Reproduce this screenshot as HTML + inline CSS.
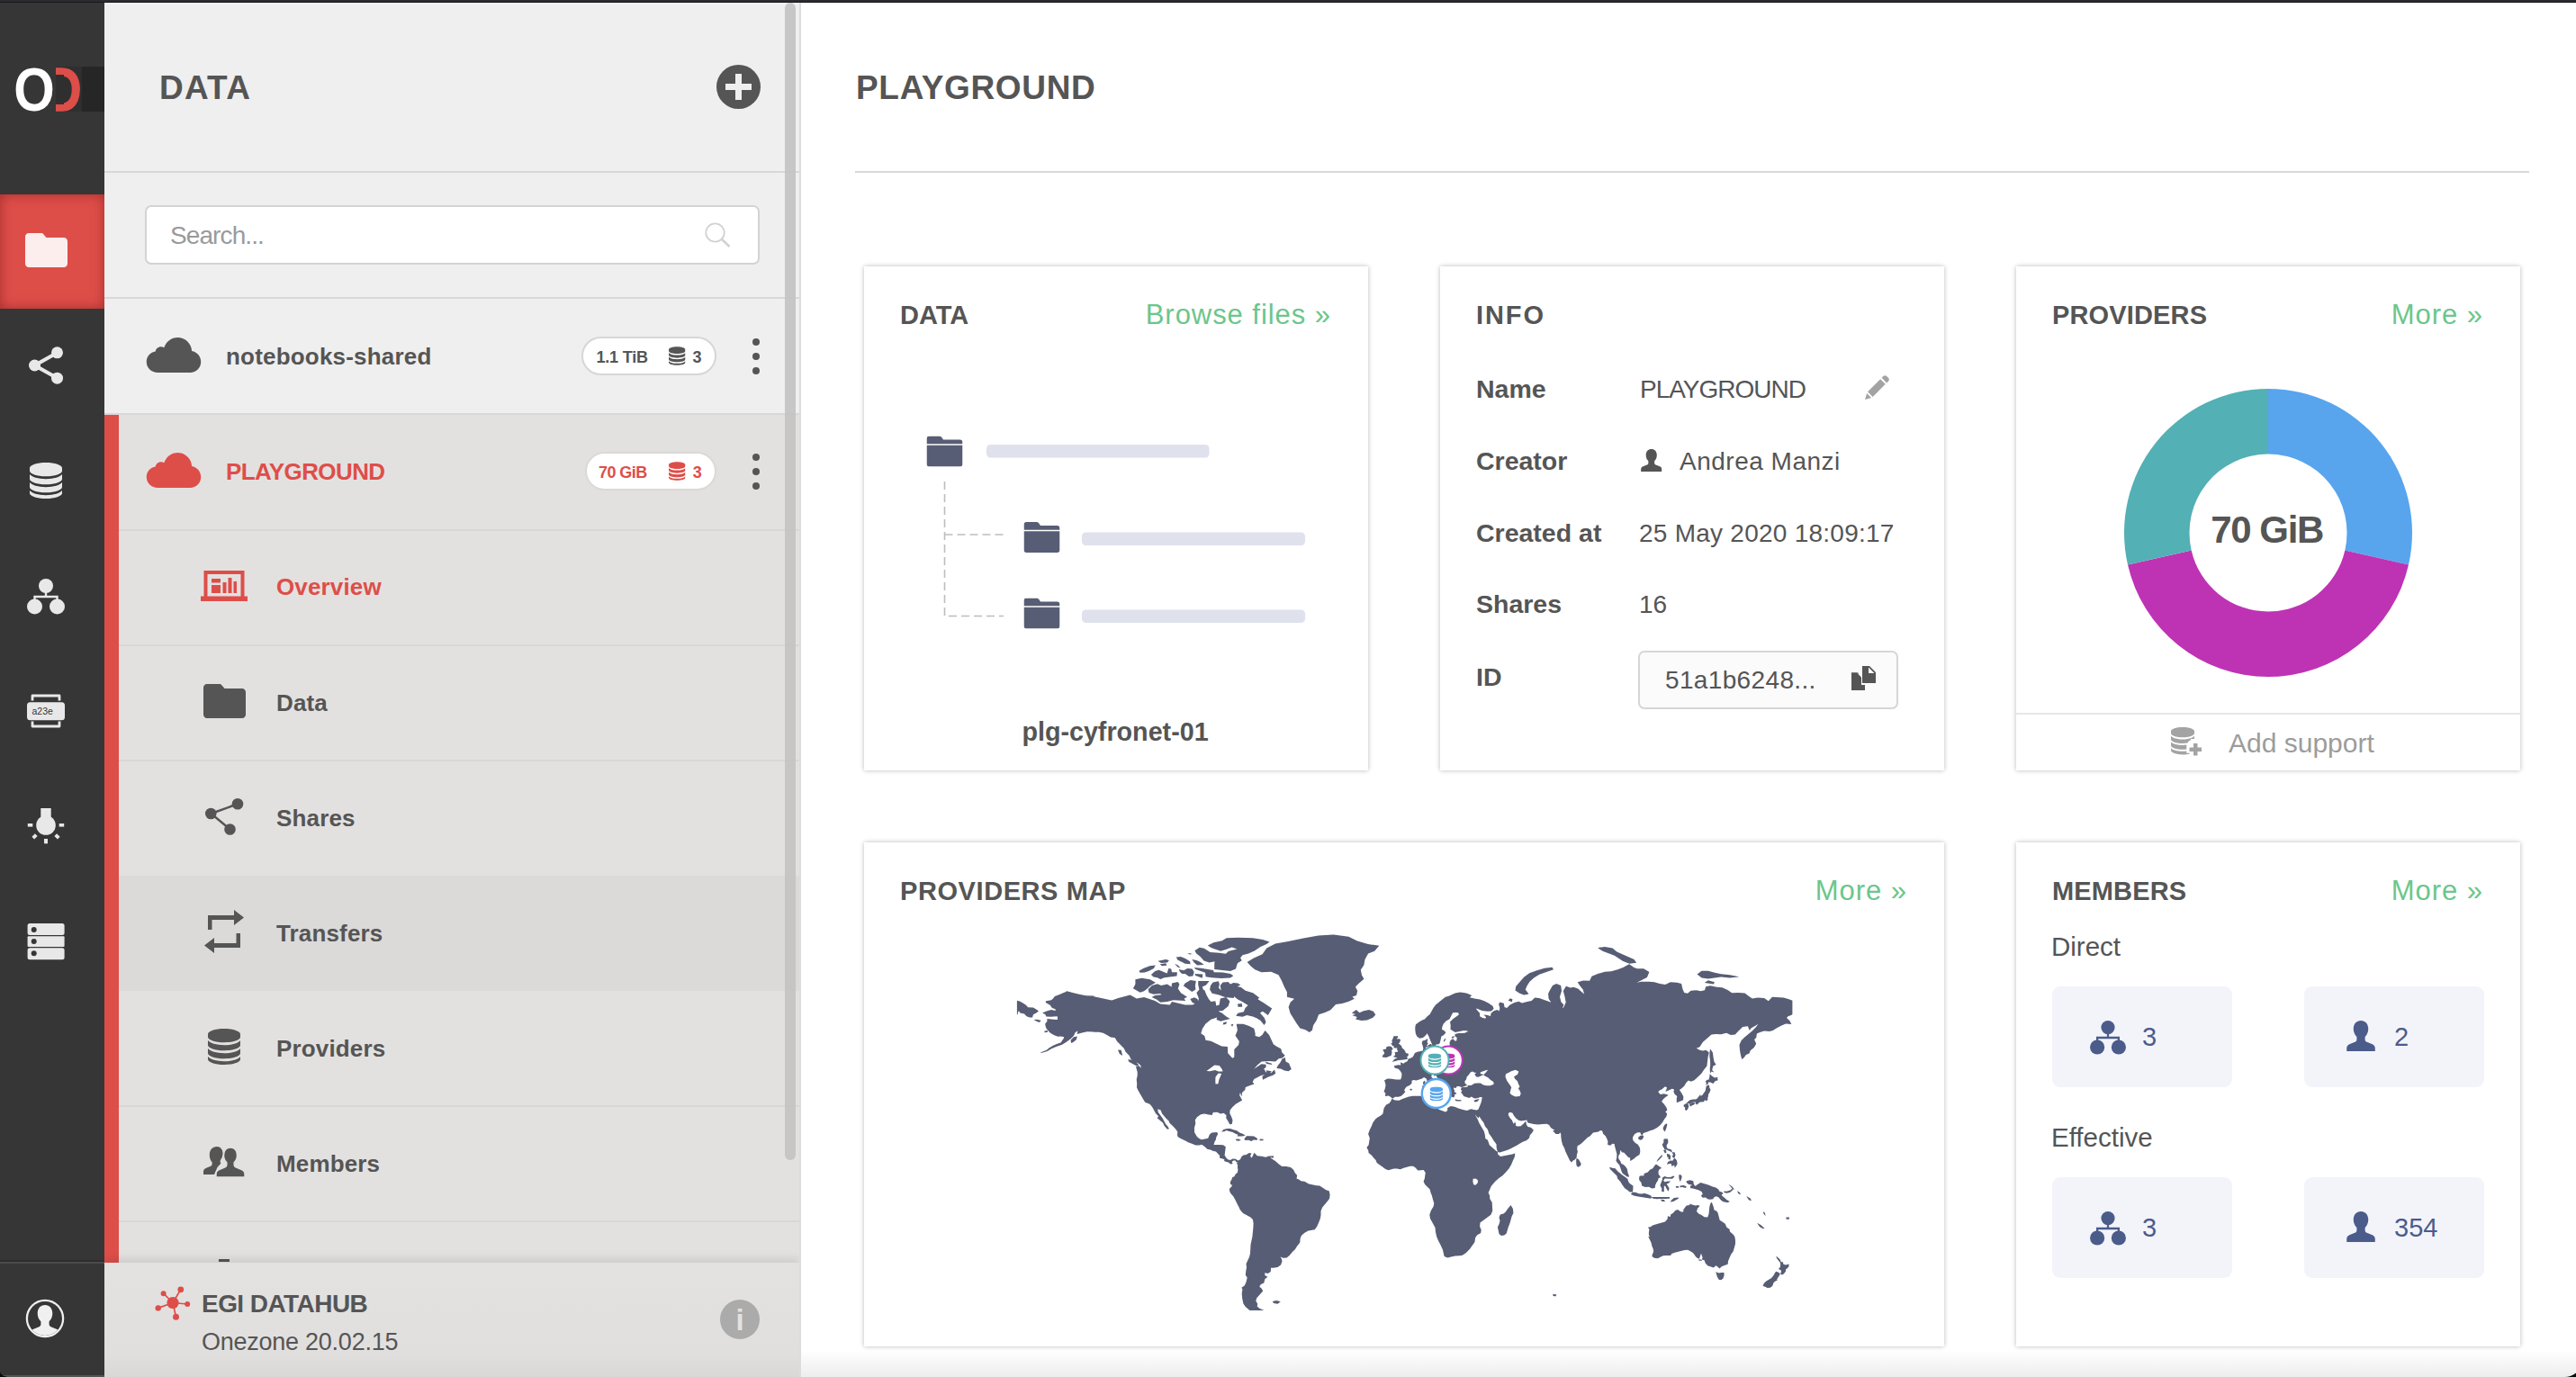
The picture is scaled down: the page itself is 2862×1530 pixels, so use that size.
<!DOCTYPE html>
<html lang="en">
<head>
<meta charset="utf-8">
<title>PLAYGROUND - Onezone</title>
<style>
*{box-sizing:border-box;margin:0;padding:0}
html,body{width:2862px;height:1530px;overflow:hidden;background:#fff}
body{font-family:"Liberation Sans","DejaVu Sans",sans-serif;color:#555;position:relative}
.abs{position:absolute}
svg{display:block;overflow:visible}
/* top window bar */
#topbar{position:absolute;left:0;top:0;width:2862px;height:3px;background:linear-gradient(#2c2c30 0,#2c2c30 55%,#0c0c0e 100%);z-index:50}
/* left icon bar */
#lbar{position:absolute;left:0;top:0;width:116px;height:1530px;background:#363636}
#lbar .active{position:absolute;left:0;top:216px;width:116px;height:127px;background:#de4e49;box-shadow:inset 0 0 14px rgba(120,20,20,.55)}
#lbar .ic{position:absolute;left:0;width:102px;display:flex;justify-content:center}
#lbar .sep{position:absolute;left:0;top:1400px;width:116px;height:4px;background:linear-gradient(#2d2d2d 0,#2d2d2d 50%,#4b4b4b 50%,#4b4b4b 100%)}
#lbar .bot{position:absolute;left:0;top:1528px;width:116px;height:2px;background:#555}
#logo-dark1{position:absolute;left:62px;top:74px;width:29px;height:50px;background:#2f2f2f}
#logo-dark2{position:absolute;left:91px;top:74px;width:25px;height:50px;background:#262626}
#logoO{position:absolute;left:0;top:60px;width:76px;text-align:center;font-weight:bold;font-size:68px;line-height:78px;color:#fff;transform-origin:38px 50%;transform:scaleX(.86)}
#logoD{position:absolute;left:37px;top:60px;width:68px;text-align:center;font-weight:bold;font-size:68px;line-height:78px;color:#de4e49;transform-origin:34px 50%;transform:scaleX(.8);-webkit-text-stroke:1.5px #de4e49}
#logo-c1{position:absolute;left:52px;top:70px;width:10px;height:58px;background:#363636}
#logo-c2{position:absolute;left:62px;top:83px;width:9px;height:32.5px;background:#2f2f2f}
/* second sidebar */
#side{position:absolute;left:116px;top:0;width:772px;height:1530px;background:#efefef;overflow:hidden}
#sideborder{position:absolute;left:888px;top:0;width:2px;height:1530px;background:#dcdcdc}
#side .hline{position:absolute;left:0;width:772px;height:2px;background:#d8d8d8}
#side h1{position:absolute;left:61px;top:74px;font-size:37px;line-height:48px;font-weight:bold;letter-spacing:1.2px;color:#555}
#plus{position:absolute;left:680px;top:72px;width:49px;height:49px;border-radius:50%;background:#555}
#plus:before{content:"";position:absolute;left:10px;top:21px;width:29px;height:7px;background:#efefef}
#plus:after{content:"";position:absolute;left:21px;top:10px;width:7px;height:29px;background:#efefef}
#search{position:absolute;left:45px;top:228px;width:683px;height:65.5px;border:2px solid #d3d3d3;border-radius:7px;background:#fff;font-size:28px;line-height:63px;color:#9a9a9a;padding-left:26px;letter-spacing:-.9px}
#activebg{position:absolute;left:0;top:461px;width:772px;height:942px;background:#e3e1e0}
#redbar{position:absolute;left:0;top:461px;width:16px;height:942px;background:#de4e49}
#hoverbg{position:absolute;left:16px;top:973px;width:756px;height:128px;background:#dbdad9}
.row{position:absolute;left:0;width:772px;height:128px}
.row .nm{position:absolute;left:135px;top:40px;font-size:26px;letter-spacing:.2px;line-height:48px;font-weight:bold;color:#555;white-space:nowrap}
.row .cloud{position:absolute;left:46px;top:43px}
.row.red .nm{color:#de4e49;letter-spacing:-.6px}
.pill{position:absolute;top:42px;height:43px;border:2px solid #d6d6d6;border-radius:22px;background:#fff;font-size:18px;font-weight:bold;line-height:39px;letter-spacing:-.2px;white-space:nowrap;color:#555}
.pill span{position:absolute;top:1.5px}
.dots{position:absolute;left:720px;top:44px;width:8px}
.dots i{display:block;width:8px;height:8px;border-radius:50%;background:#555;margin-bottom:8px}
.sub{position:absolute;left:16px;width:756px;height:128px}
.sub .nm{position:absolute;left:175px;top:40px;font-size:26px;letter-spacing:.15px;line-height:48px;font-weight:bold;color:#555;white-space:nowrap}
.sub .icn{position:absolute;left:85px;top:-2px;width:64px;height:128px;display:flex;align-items:center;justify-content:center}
.sub.red .nm{color:#de4e49}
#scroll{position:absolute;left:756px;top:3px;width:12px;height:1286px;border-radius:6px;background:#c4c4c4;opacity:.95}
#sfoot{position:absolute;left:0;top:1403px;width:772px;height:127px;background:linear-gradient(#e4e2e1,#e1dfde 80%,#d9d8d7);box-shadow:0 -4px 10px rgba(0,0,0,.10)}
#sfoot .t1{position:absolute;left:108px;top:26px;font-size:28px;line-height:40px;font-weight:bold;letter-spacing:-.55px;color:#555;white-space:nowrap}
#sfoot .t2{position:absolute;left:108px;top:68px;font-size:27px;line-height:40px;letter-spacing:-.25px;color:#555;white-space:nowrap}
#info{position:absolute;left:684px;top:41px;width:44px;height:44px;border-radius:50%;background:#ababab;color:#e4e2e1;font-weight:bold;font-size:33px;line-height:46px;text-align:center}
/* main */
#main{position:absolute;left:890px;top:0;width:1972px;height:1530px;background:#fff;overflow:hidden}
#main h1{position:absolute;left:61px;top:74px;font-size:37px;line-height:48px;font-weight:bold;letter-spacing:.68px;color:#555;white-space:nowrap}
#main .rule{position:absolute;left:60px;top:190px;width:1860px;height:2px;background:#d8d8d8}
.card{position:absolute;width:560px;height:560px;background:#fff;box-shadow:0 0 5px rgba(0,0,0,.28)}
.card h2{position:absolute;left:40px;top:34px;font-size:29px;line-height:40px;font-weight:bold;letter-spacing:.15px;color:#555;white-space:nowrap}
.card .more{position:absolute;right:41px;top:34px;font-size:31px;line-height:40px;letter-spacing:.95px;color:#6cc68b;white-space:nowrap}
.lbl{position:absolute;left:40px;font-size:28.5px;line-height:40px;font-weight:bold;color:#555;white-space:nowrap}
.val{position:absolute;left:222px;font-size:28px;line-height:40px;color:#555;white-space:nowrap}
.sec{position:absolute;left:39px;font-size:29.5px;line-height:40px;color:#555;white-space:nowrap}
.tile{position:absolute;width:200px;height:112px;border-radius:9px;background:#f3f4fa;color:#4b5c8b;font-size:29px;line-height:40px}
.tile span{position:absolute;top:36px;white-space:nowrap}
#bottomfade{position:absolute;left:0;top:1500px;width:1972px;height:30px;background:linear-gradient(rgba(0,0,0,0),rgba(0,0,0,.07))}
</style>
</head>
<body>
<svg width="0" height="0" style="position:absolute">
<defs>
<symbol id="i-cloud" viewBox="0 0 62 40"><path d="M13 40C5.5 40 0 34.6 0 27.8 0 21.7 4.4 16.9 10.2 16 10.6 13 13.2 10.6 16.5 10.6c1.300 0 2.500.4 3.500 1C22.300 4.800 28.300 0 35.500 0 44.200 0 51.300 6.900 51.600 15.500 57.500 16.500 62 21.600 62 27.700 62 34.500 56.500 40 49.700 40Z"/></symbol>
<symbol id="i-db" viewBox="0 0 36 40"><path d="M18 0C8.060 0 0 2.700 0 6v3.200c0 3.300 8.060 6 18 6s18-2.700 18-6V6c0-3.300-8.060-6-18-6ZM0 13v5.200c0 3.300 8.060 6 18 6s18-2.700 18-6V13c-2.300 3.100-9.500 5.200-18 5.200S2.300 16.100 0 13Zm0 9v5.200c0 3.300 8.060 6 18 6s18-2.700 18-6V22c-2.300 3.100-9.500 5.200-18 5.200S2.300 25.100 0 22Zm0 9v3c0 3.300 8.060 6 18 6s18-2.700 18-6v-3c-2.300 3.100-9.500 5.200-18 5.200S2.300 34.100 0 31Z"/></symbol>
<symbol id="i-folder" viewBox="0 0 47 38"><path d="M4 0h13.500c1.200 0 2.300.5 3 1.400L23.500 5H43c2.200 0 4 1.800 4 4v25c0 2.200-1.800 4-4 4H4c-2.200 0-4-1.800-4-4V4c0-2.200 1.800-4 4-4Z"/></symbol>
<symbol id="i-share" viewBox="0 0 38 42"><path d="M31.500 7 6.500 21 31.500 35" fill="none" stroke="currentColor" stroke-width="4.200"/><circle cx="31.500" cy="6.800" r="6.500"/><circle cx="6.500" cy="21" r="6.500"/><circle cx="31.500" cy="35.200" r="6.500"/></symbol>
<symbol id="i-tree" viewBox="0 0 42 40"><circle cx="21" cy="8" r="8"/><circle cx="8.500" cy="31" r="8.500"/><circle cx="33.500" cy="31" r="8.500"/><path d="M21 14v6M8.500 24v-4h25v4" fill="none" stroke="currentColor" stroke-width="2.400"/></symbol>
<symbol id="i-user" viewBox="0 0 26 28"><path d="M13 0c4 0 6.800 3 6.800 7.500 0 3-1.200 5.700-3 7.300v2.600c0 1 .7 1.800 1.700 2.200l5 2c1.500.6 2.500 2 2.500 3.600V28H0v-2.800c0-1.600 1-3 2.500-3.600l5-2c1-.4 1.700-1.200 1.700-2.200v-2.600c-1.800-1.600-3-4.300-3-7.300C6.200 3 9 0 13 0Z"/></symbol>
</defs>
</svg>
<div id="topbar"></div>
<div id="lbar">
  <div id="logo-dark1"></div><div id="logo-dark2"></div>
  <div id="logoD">D</div><div id="logo-c1"></div><div id="logo-c2"></div><div id="logoO">O</div>
  <div class="active"></div>
  <svg class="abs" style="left:28px;top:259px;color:#fbeeed" width="47" height="38" fill="currentColor"><use href="#i-folder"/></svg>
  <svg class="abs" style="left:32px;top:385px;color:#e8e8e8" width="38" height="42" fill="currentColor"><use href="#i-share"/></svg>
  <svg class="abs" style="left:33px;top:514px;color:#e8e8e8" width="36" height="40" fill="currentColor"><use href="#i-db"/></svg>
  <svg class="abs" style="left:30px;top:643px;color:#e8e8e8" width="42" height="40" fill="currentColor"><use href="#i-tree"/></svg>
  <!-- token -->
  <svg class="abs" style="left:30px;top:771px" width="42" height="38" viewBox="0 0 42 38">
    <path d="M6 7.500V2h30v5.500M6 30.500V36h30v-5.500" fill="none" stroke="#e8e8e8" stroke-width="2.800" stroke-linejoin="round"/>
    <rect x="0" y="9.300" width="42" height="20" rx="3.500" fill="#e8e8e8"/>
    <text x="5.500" y="23" font-family="'Liberation Sans','DejaVu Sans',sans-serif" font-size="10.500" fill="#363636">a23e</text>
  </svg>
  <!-- bulb -->
  <svg class="abs" style="left:30px;top:898px" width="42" height="40" viewBox="0 0 42 40" fill="#e8e8e8">
    <circle cx="21" cy="19" r="10.800"/><rect x="15.300" y="0" width="11.400" height="12"/>
    <rect x="0.800" y="17" width="5.500" height="3.600"/><rect x="35.700" y="17" width="5.500" height="3.600"/>
    <rect x="19" y="34" width="4" height="5.300"/>
    <rect x="6" y="29.500" width="5" height="3.800" transform="rotate(-45 8.500 31.400)"/>
    <rect x="31" y="29.500" width="5" height="3.800" transform="rotate(45 33.500 31.400)"/>
  </svg>
  <!-- server -->
  <svg class="abs" style="left:30px;top:1026px" width="42" height="41" viewBox="0 0 42 41">
    <rect x=".600" y="0" width="41" height="13" rx="2.500" fill="#e8e8e8"/><rect x=".600" y="14.300" width="41" height="11.600" rx="1" fill="#e8e8e8"/><rect x=".600" y="27.200" width="41" height="13" rx="2.500" fill="#e8e8e8"/>
    <circle cx="7.700" cy="7" r="3" fill="#363636"/><circle cx="7.700" cy="20.100" r="3" fill="#363636"/><circle cx="7.700" cy="33.200" r="3" fill="#363636"/>
  </svg>
  <div class="sep"></div><div class="bot"></div>
  <!-- user -->
  <svg class="abs" style="left:28px;top:1443px" width="44" height="44" viewBox="0 0 44 44">
    <circle cx="22" cy="22" r="20.500" fill="#f0f0f0" stroke="#f0f0f0" stroke-width="1.500"/>
    <clipPath id="uc"><circle cx="22" cy="22" r="19"/></clipPath>
    <circle cx="22" cy="22" r="19" fill="#363636"/>
    <g clip-path="url(#uc)" fill="#f0f0f0"><path d="M22 7c5 0 8.300 3.800 8.300 9.300 0 3.700-1.500 7-3.700 9v3.200c0 1.200.8 2.200 2 2.700l6.200 2.500c1.900.8 3.200 2.500 3.200 4.500V44H6v-5.800c0-2 1.300-3.700 3.200-4.500l6.200-2.500c1.200-.5 2-1.500 2-2.700v-3.200c-2.200-2-3.700-5.300-3.700-9C13.700 10.800 17 7 22 7Z"/></g>
  </svg>
</div>
<div id="side">
  <h1>DATA</h1>
  <div id="plus"></div>
  <div class="hline" style="top:190px"></div>
  <div id="search">Search...
    <svg class="abs" style="left:620px;top:16.500px" width="30" height="30" viewBox="0 0 30 30" fill="none" stroke="#d2d2d2" stroke-width="1.800"><circle cx="11.500" cy="11.500" r="10.200"/><path d="M19 19 27.500 27" stroke-width="2.600"/></svg>
  </div>
  <div class="hline" style="top:330px"></div>
  <div id="activebg"></div>
  <div id="hoverbg"></div>
  <div id="redbar"></div>
  <div class="hline" style="top:459px"></div>
  <div class="hline" style="top:588px;left:16px;background:#d9d7d6"></div>
  <div class="hline" style="top:716px;left:16px;background:#d9d7d6"></div>
  <div class="hline" style="top:844px;left:16px;background:#d9d7d6"></div>
  <div class="hline" style="top:1228px;left:16px;background:#d9d7d6"></div>
  <div class="hline" style="top:1356px;left:16px;background:#d9d7d6"></div>

  <div class="row" style="top:332px">
    <svg class="cloud" width="62" height="39" fill="#555" preserveAspectRatio="none"><use href="#i-cloud"/></svg>
    <div class="nm">notebooks-shared</div>
    <div class="pill" style="left:530px;width:150px"><span style="left:14.5px">1.1 TiB</span>
      <svg class="abs" style="left:94.5px;top:8.500px" width="18.500" height="21" fill="#555"><use href="#i-db"/></svg>
      <span style="left:121.500px">3</span></div>
    <div class="dots"><i></i><i></i><i></i></div>
  </div>
  <div class="row red" style="top:460px">
    <svg class="cloud" width="62" height="39" fill="#de4e49" preserveAspectRatio="none"><use href="#i-cloud"/></svg>
    <div class="nm">PLAYGROUND</div>
    <div class="pill" style="left:533.5px;width:146.5px;color:#de4e49;border-color:#dbd9d8"><span style="left:13.5px;letter-spacing:-.55px">70 GiB</span>
      <svg class="abs" style="left:91.200px;top:8.500px" width="18.500" height="21" fill="#de4e49"><use href="#i-db"/></svg>
      <span style="left:118.300px">3</span></div>
    <div class="dots"><i></i><i></i><i></i></div>
  </div>

  <div class="sub red" style="top:589px">
    <div class="icn"><svg width="52" height="34" viewBox="0 0 52 34" fill="#de4e49"><path d="M3.500 0h45v28.500H52V34H0v-5.500h3.500ZM7.500 4v24.500h37V4Z" fill-rule="evenodd"/><rect x="12" y="9" width="10" height="4.500"/><rect x="12" y="16" width="10" height="9"/><rect x="24.500" y="13" width="4" height="12"/><rect x="30.500" y="8" width="4" height="17"/><rect x="36.500" y="12" width="3.500" height="13"/></svg></div>
    <div class="nm" style="top:39px">Overview</div>
  </div>
  <div class="sub" style="top:717px">
    <div class="icn"><svg width="47" height="38" fill="#555"><use href="#i-folder"/></svg></div>
    <div class="nm">Data</div>
  </div>
  <div class="sub" style="top:845px">
    <div class="icn"><svg width="43" height="41" viewBox="0 0 43 41" style="color:#555" fill="#555"><path d="M35.500 6.500 6.500 17 27 34" fill="none" stroke="#555" stroke-width="2.500"/><circle cx="36" cy="6.300" r="6.300"/><circle cx="6.300" cy="17" r="6.300"/><circle cx="27.500" cy="34.500" r="6.300"/></svg></div>
    <div class="nm">Shares</div>
  </div>
  <div class="sub" style="top:973px">
    <div class="icn"><svg width="44" height="48" viewBox="0 0 44 48" fill="#555"><path d="M33 0 44 8.500 33 17v-6H8.500v11H4V6h29ZM11 48 0 39.500 11 31v6h24.500V26H40v16H11Z"/></svg></div>
    <div class="nm">Transfers</div>
  </div>
  <div class="sub" style="top:1101px">
    <div class="icn"><svg width="36" height="40" fill="#555"><use href="#i-db"/></svg></div>
    <div class="nm">Providers</div>
  </div>
  <div class="sub" style="top:1229px">
    <div class="icn"><svg width="46" height="34" viewBox="0 0 46 34" fill="#555"><path d="M15 0c4 0 6.500 3.200 6.500 7.500 0 2.200-.6 4.300-1.700 6-1.500 2-1.500 3.800-.3 5l-4 4.500-3.500 8H0v-3c0-1.800 1-3.300 2.600-4l5.400-2.300c1-.4 1.600-1.300 1.600-2.300v-2.200C7.800 15.500 6.800 12.600 6.800 9.500 6.800 3.500 10 0 15 0Z"/><path d="M30 1c4.500 0 7.500 3.500 7.500 8.500 0 3.300-1.300 6.300-3.300 8.200v2.600c0 1.100.7 2 1.800 2.500l6.500 2.700c2 .8 3.500 2.700 3.500 4.800V34H14v-3.700c0-2.100 1.500-4 3.500-4.800l6.500-2.700c1.100-.5 1.800-1.400 1.800-2.500v-2.600c-2-1.900-3.300-4.900-3.300-8.200C22.500 4.500 25.500 1 30 1Z" stroke="#e3e1e0" stroke-width="1.500"/></svg></div>
    <div class="nm">Members</div>
  </div>
  <div class="abs" style="left:127px;top:1399px;width:12px;height:3px;background:#555"></div>

  <div id="scroll"></div>
  <div id="sfoot">
    <svg class="abs" style="left:55px;top:24px" width="42" height="42" viewBox="0 0 42 42" fill="#de4e49" stroke="#de4e49" stroke-width="1.700">
      <path d="M21 20.500 29.800 5.800M21 20.500 10.600 10.200M21 20.500 37.200 22M21 20.500 4.700 26.400M21 20.500 24.500 36.200" fill="none"/>
      <circle cx="21" cy="20.500" r="6.600" stroke="none"/><circle cx="29.800" cy="5.800" r="3.400" stroke="none"/><circle cx="10.600" cy="10.200" r="3" stroke="none"/><circle cx="37.200" cy="22" r="3" stroke="none"/><circle cx="4.700" cy="26.400" r="3.200" stroke="none"/><circle cx="24.500" cy="36.200" r="3.500" stroke="none"/>
    </svg>
    <div class="t1">EGI DATAHUB</div>
    <div class="t2">Onezone 20.02.15</div>
    <div id="info">i</div>
  </div>
</div>
<div id="sideborder"></div>
<div id="main">
  <h1>PLAYGROUND</h1>
  <div class="rule"></div>

  <!-- DATA card -->
  <div class="card" style="left:70px;top:296px">
    <h2 style="letter-spacing:0">DATA</h2>
    <div class="more">Browse files »</div>
    <svg class="abs" style="left:0;top:0" width="560" height="560" viewBox="0 0 560 560">
      <defs><symbol id="i-fold2" viewBox="0 0 40 34"><path d="M3 0h11c1.200 0 2.200.6 2.800 1.500L18.500 4H37c1.700 0 3 1.300 3 3v1.700H0V3c0-1.700 1.300-3 3-3ZM0 10.300h40V31c0 1.700-1.300 3-3 3H3c-1.700 0-3-1.300-3-3Z"/></symbol></defs>
      <g fill="#575d74">
        <use href="#i-fold2" x="69.500" y="188.500" width="40" height="34"/>
        <use href="#i-fold2" x="177.500" y="284" width="40" height="34"/>
        <use href="#i-fold2" x="177.500" y="368.500" width="40" height="34"/>
      </g>
      <g fill="#dfe1ed">
        <rect x="136" y="198" width="247.500" height="14.500" rx="4.500"/>
        <rect x="242" y="295.500" width="248" height="14.500" rx="4.500"/>
        <rect x="242" y="381.500" width="248" height="14.500" rx="4.500"/>
      </g>
      <path d="M89.500 239V388.500H155M89.500 298H155" fill="none" stroke="#bdbdbd" stroke-width="1.600" stroke-dasharray="9 5"/>
    </svg>
    <div class="abs" style="left:0;top:497px;width:558px;text-align:center;font-size:28.700px;line-height:40px;font-weight:bold;color:#555">plg-cyfronet-01</div>
  </div>

  <!-- INFO card -->
  <div class="card" id="infocard" style="left:710px;top:296px">
    <h2 style="letter-spacing:1.9px">INFO</h2>
    <div class="lbl" style="top:116px">Name</div>
    <div class="lbl" style="top:196px">Creator</div>
    <div class="lbl" style="top:276px">Created at</div>
    <div class="lbl" style="top:355px">Shares</div>
    <div class="lbl" style="top:436px">ID</div>
    <div class="val" style="top:117px;letter-spacing:-1px">PLAYGROUND</div>
    <svg class="abs" style="left:472px;top:121px" width="27" height="27" viewBox="0 0 28 28" fill="#a3a3a3"><path d="M21.300.9c1-1 2.500-1 3.500 0l2.300 2.300c1 1 1 2.500 0 3.500l-2 2-5.800-5.800ZM17.800 4.400l5.800 5.800L9 24.800 3.200 19ZM2.200 20.700l5.100 5.100L0 28Z"/></svg>
    <svg class="abs" style="left:222.500px;top:202.500px" width="23.500" height="25" fill="#555"><use href="#i-user"/></svg>
    <div class="val" style="top:197px;left:266px;letter-spacing:.5px">Andrea Manzi</div>
    <div class="val" style="top:277px;left:221px;letter-spacing:.25px">25 May 2020 18:09:17</div>
    <div class="val" style="top:356px;left:221px">16</div>
    <div class="abs" style="left:220px;top:427px;width:289px;height:65px;border:2px solid #d6d6d6;border-radius:7px;background:#fbfbfb"></div>
    <div class="val" style="top:440px;left:250px;letter-spacing:.35px">51a1b6248...</div>
    <svg class="abs" style="left:457px;top:444px" width="27" height="27" viewBox="0 0 27 27" fill="#555"><path d="M9 0h8l7 7v12H9ZM16 1.500V8h6.500Z" fill-rule="evenodd" transform="translate(3 0)"/><path d="M0 7.500h7.500l0 0V21h7.500v6H0ZM6.500 8.500" /><path d="M0 7.500h6l5 5V27H0Z" /></svg>
  </div>

  <!-- PROVIDERS card -->
  <div class="card" style="left:1350px;top:296px">
    <h2>PROVIDERS</h2>
    <div class="more">More »</div>
    <svg class="abs" style="left:0;top:0" width="560" height="560" viewBox="0 0 560 560">
      
      <path d="M280.00 136.00A160 160 0 0 1 435.99 331.60L365.31 315.47A87.5 87.5 0 0 0 280.00 208.50Z" fill="#58a5ee"/><path d="M435.99 331.60A160 160 0 0 1 124.01 331.60L194.69 315.47A87.5 87.5 0 0 0 365.31 315.47Z" fill="#be33b4"/><path d="M124.01 331.60A160 160 0 0 1 280.00 136.00L280.00 208.50A87.5 87.5 0 0 0 194.69 315.47Z" fill="#53b0b5"/>
      <text x="278.500" y="307" text-anchor="middle" font-family="'Liberation Sans','DejaVu Sans',sans-serif" font-weight="bold" font-size="42" letter-spacing="-1.400" fill="#555">70 GiB</text>
    </svg>
    <div class="abs" style="left:0;top:496px;width:560px;height:2px;background:#e6e6e6"></div>
    <svg class="abs" style="left:172px;top:512px" width="34" height="32" viewBox="0 0 34 32" fill="#a3a3a3"><path d="M13 0C5.800 0 0 2 0 4.500v2.300C0 9.300 5.800 11.300 13 11.300s13-2 13-4.500V4.500C26 2 20.200 0 13 0ZM0 9.800v3.700c0 2.500 5.800 4.500 13 4.500 2 0 3.900-.2 5.600-.4.400-1.600 1.700-2.800 3.400-3V13h4V9.800c-1.700 2.200-6.900 3.700-13 3.700S1.700 12 0 9.800Zm0 6.700v3.700c0 2.500 5.800 4.500 13 4.500 1.500 0 3-.1 4.300-.3v-4.800c-1.400.2-2.800.3-4.300.3-6.100 0-11.300-1.500-13-3.400Zm0 6.700v2.600C0 28.300 5.800 30.500 13 30.500c2.900 0 5.600-.4 7.800-1v-.8H17.300v-2.300c-1.400.2-2.800.3-4.300.3-6.100 0-11.300-1.500-13-3.500Z"/><path d="M23 15.500h4.500V20H32v4.500h-4.500V29H23v-4.500h-4.500V20H23Z" transform="translate(2 2.500)"/></svg>
    <div class="abs" style="left:236px;top:506px;font-size:30px;line-height:48px;color:#9c9c9c;white-space:nowrap">Add support</div>
  </div>

  <!-- MAP card -->
  <div class="card" style="left:70px;top:936px;width:1200px">
    <h2 style="letter-spacing:.58px">PROVIDERS MAP</h2>
    <div class="more">More »</div>
    <svg class="abs" style="left:0;top:0" width="1200" height="560" viewBox="0 0 1200 560"><path d="M364.0 123.5L359.7 122.9L359.6 123.2L362.7 124.8ZM377.6 131.4L383.5 133.5L389.5 132.3L389.2 135.7L389.2 141.0L407.0 142.9L413.0 140.5L414.9 134.2L419.7 131.3L418.1 128.3L420.5 125.3L427.1 123.5L433.8 120.5L440.5 115.9L447.2 113.0L450.5 110.6L442.9 107.9L432.0 106.3L415.3 105.7L402.7 106.3L397.7 109.2L388.5 111.3L381.8 114.4L386.0 117.2L396.1 120.7L402.0 119.0L408.6 116.6L414.4 118.4L404.7 120.9L401.9 123.8L394.5 122.7L384.5 122.0L377.8 117.8L372.7 116.7L367.4 120.2L369.2 123.4L373.4 126.8ZM348.3 130.5L356.8 134.8L362.6 135.2L362.1 132.3L356.9 128.9L351.9 127.0L346.8 127.6ZM326.7 131.8L326.7 132.0L330.0 133.9L336.9 133.5L338.9 131.0L335.1 130.1ZM364.3 130.1L366.7 133.4L370.1 136.4L377.3 136.0L377.4 135.8L373.7 133.0L369.4 130.9L364.4 130.0ZM335.3 134.2L328.8 135.2L330.8 137.3L336.3 136.8ZM348.6 136.4L345.7 134.9L345.5 135.2L348.3 138.5L351.3 139.5L351.5 139.2ZM317.5 137.2L310.8 139.7L305.5 142.8L306.6 144.8L311.8 144.4L316.8 142.7L321.9 140.1L323.8 136.5ZM364.5 140.5L359.3 140.1L355.1 142.2L349.8 140.9L350.8 143.8L353.4 146.0L356.8 146.0L360.9 149.0L365.4 148.5L366.7 144.1ZM379.6 149.3L386.0 150.2L396.9 150.9L407.0 150.4L410.3 148.3L407.1 146.0L398.6 144.5L388.8 144.3L387.9 142.1L374.4 139.7L366.8 139.1L368.4 141.0L379.0 144.7ZM321.6 149.4L325.8 150.2L329.3 152.1L333.5 150.2L347.5 148.5L347.9 144.3L342.0 144.3L341.2 140.6L338.3 140.1L336.6 145.5L327.6 141.8L323.3 143.1L318.9 147.0ZM375.8 150.7L376.3 146.4L367.3 145.9L368.3 148.1ZM314.4 162.7L317.7 159.4L323.9 155.8L317.7 152.2L308.4 150.7L301.4 152.3L301.4 157.4L298.9 162.2L306.7 166.8L311.0 165.2ZM354.8 159.2L364.3 166.1L368.4 163.5L367.9 159.2L368.8 153.9L362.6 153.0L356.7 156.5ZM350.4 157.4L348.6 155.1L342.0 156.4L341.6 160.6L336.8 157.6L330.1 159.1L325.9 157.2L319.9 158.9L315.6 163.3L316.5 166.9L321.7 168.8L329.2 167.9L330.4 169.2L323.3 169.9L319.6 171.9L325.0 174.4L329.2 177.8L336.8 176.9L343.5 175.3L357.3 176.1L355.5 173.6L359.0 171.7L352.0 167.3L348.8 162.5ZM431.9 193.6L436.1 195.3L440.2 197.8L444.6 203.0L446.5 199.7L444.8 194.9L439.9 189.5L442.9 187.8L448.8 192.1L453.2 184.6L443.9 178.2L437.4 174.3L439.1 172.5L432.1 167.3L423.8 164.8L418.8 161.0L414.6 160.1L418.3 158.5L415.4 156.4L410.3 156.0L407.0 157.4L404.5 155.1L398.5 155.6L395.7 159.1L396.7 164.4L394.0 161.6L394.9 157.5L393.8 154.3L387.6 155.6L385.0 159.0L384.1 163.4L386.7 167.7L394.4 169.4L401.1 171.9L410.5 173.0L411.2 171.2L415.2 174.4L420.2 176.9L426.6 180.9L423.5 184.1L421.8 188.2L415.2 189.8L413.2 192.8L420.4 193.7L425.3 192.0ZM415.0 179.4L415.5 182.8L420.2 182.8L419.7 178.9ZM183.9 194.5L187.0 194.5L188.0 191.2L191.3 189.6L194.0 187.4L191.3 185.6L187.9 183.6L182.1 183.3L180.2 181.1L176.9 178.8L172.9 176.5L169.9 175.7L169.9 191.2L170.7 191.2L171.1 187.9L172.1 187.4L173.4 189.6L178.0 190.6L180.6 193.2ZM191.1 198.4L194.8 200.1L196.7 198.1L192.5 196.7L188.8 197.1L188.8 197.3ZM216.6 169.3L211.9 170.9L210.0 173.6L208.0 175.2L202.1 176.3L201.7 178.1L206.7 180.7L208.7 183.7L212.8 185.6L212.6 186.9L208.1 185.9L204.2 186.9L198.3 189.3L198.3 189.4L201.4 191.2L202.4 193.5L207.5 193.8L214.5 193.2L215.1 194.6L214.8 197.0L210.8 196.7L203.4 196.0L203.4 198.8L201.1 201.8L202.1 206.1L204.1 208.8L206.7 211.4L210.7 214.1L215.3 215.7L217.9 215.4L221.7 216.0L222.3 217.1L220.4 219.7L218.5 222.6L214.6 223.8L210.0 225.8L205.4 228.4L202.8 230.7L198.9 232.3L195.8 233.8L195.9 234.1L197.7 233.8L203.6 231.9L208.2 229.2L213.4 227.0L220.0 224.7L225.2 221.4L229.8 218.1L233.1 214.8L234.4 211.5L237.3 209.3L236.6 213.0L242.2 211.6L248.0 210.3L255.2 210.4L255.2 210.7L260.9 210.7L265.6 211.8L270.3 214.2L274.0 216.4L278.7 217.0L281.0 221.1L288.7 228.8L290.6 232.8L294.7 237.0L296.6 241.2L298.3 242.1L293.3 241.0L294.2 243.7L301.5 247.8L305.5 249.1L301.9 248.8L303.7 255.2L303.7 259.0L302.7 263.4L303.2 267.7L303.0 272.3L304.2 274.9L307.6 281.1L312.2 288.8L317.4 290.7L320.0 293.8L324.1 301.2L327.1 304.2L325.6 306.3L332.0 311.6L333.6 315.1L336.9 318.8L339.0 318.2L337.2 315.3L335.3 313.3L331.4 306.1L326.7 299.7L326.3 296.2L329.6 297.6L331.0 301.2L333.7 304.6L336.1 307.2L338.4 309.3L339.6 312.1L343.2 315.2L346.8 319.2L348.4 322.1L347.9 324.8L348.7 327.2L352.2 329.2L356.5 331.2L360.1 333.2L368.5 336.4L372.2 336.4L375.2 335.7L378.4 338.1L381.3 340.8L384.7 341.5L388.1 343.0L390.9 343.5L395.1 347.9L395.1 350.7L397.6 351.2L400.3 352.3L400.1 354.0L401.9 354.8L404.8 355.6L407.2 357.5L409.6 356.9L408.6 354.9L410.3 353.4L412.6 353.4L413.3 355.0L415.0 355.5L413.9 357.0L415.2 358.3L414.9 361.1L415.4 363.7L414.9 366.7L412.6 368.8L411.4 371.2L409.0 372.2L408.5 374.4L407.0 376.8L407.0 379.9L409.1 380.8L408.0 382.7L405.8 384.9L406.1 387.3L407.1 389.7L410.2 393.3L412.6 397.4L414.5 401.5L416.6 405.4L417.8 408.3L421.0 412.1L429.4 416.5L431.9 419.1L432.6 423.0L432.4 428.0L431.4 438.1L429.5 447.1L429.0 456.4L428.1 460.6L424.5 468.3L425.0 472.2L424.3 476.1L423.8 480.8L425.7 483.6L424.5 488.5L422.9 492.2L419.4 494.7L420.4 496.6L419.7 501.5L420.2 506.8L421.4 512.6L423.8 515.9L428.2 519.8L428.4 520.0L444.4 520.0L439.2 517.8L436.7 515.6L437.2 512.8L435.3 509.6L436.2 506.3L443.2 498.4L441.7 495.8L439.2 493.5L440.9 491.1L444.3 489.6L445.3 485.2L448.4 482.7L445.3 481.1L445.3 478.2L448.7 479.0L451.8 477.1L452.0 472.7L454.7 472.7L459.5 471.9L463.0 469.6L464.5 465.6L463.7 462.2L462.3 460.4L465.9 461.7L469.6 461.5L472.8 458.7L475.9 455.0L478.8 452.3L481.2 448.6L484.3 444.4L484.6 440.2L486.0 436.7L489.5 433.7L493.5 431.5L500.7 430.2L503.2 426.8L505.1 422.6L506.8 418.1L507.5 414.3L507.5 409.5L509.2 405.4L514.6 399.1L517.1 395.7L517.6 391.3L516.6 387.2L513.4 386.2L506.2 381.4L502.5 381.2L494.2 379.5L489.4 376.7L485.4 376.2L483.5 374.8L480.5 373.6L481.2 370.1L478.8 367.2L477.1 363.8L473.9 360.9L469.0 359.9L464.3 359.9L460.8 357.5L457.2 354.2L451.5 350.5L452.5 349.4L452.5 350.5L454.9 350.5L454.9 348.3L452.7 348.6L449.8 348.6L446.3 349.8L441.5 348.8L436.8 348.3L433.5 344.8L431.0 349.9L430.5 350.5L429.1 348.5L430.4 345.5L427.8 344.9L424.7 347.1L421.5 347.6L419.5 348.9L417.9 352.3L415.4 353.6L412.9 351.7L409.6 351.5L406.8 353.1L404.1 352.2L402.2 350.3L400.6 347.5L401.8 338.2L399.0 336.2L394.8 335.9L391.3 336.1L388.5 335.9L389.6 332.3L390.8 330.6L391.3 327.4L393.2 324.0L392.1 322.0L386.4 322.5L383.9 324.6L382.2 328.8L375.0 330.2L372.3 329.0L369.9 327.1L367.1 322.2L366.9 317.3L368.3 312.2L367.8 308.4L369.9 305.2L374.1 302.3L378.1 301.6L382.9 302.6L386.6 302.9L387.8 300.0L392.4 299.7L396.0 301.6L399.6 300.8L402.5 303.3L402.2 306.3L404.7 310.2L406.2 313.2L408.7 312.9L409.5 308.8L408.2 305.1L406.3 301.0L406.6 297.5L409.4 294.1L412.9 290.7L420.1 286.5L417.1 280.9L418.0 277.8L419.1 282.3L419.4 282.3L420.2 277.8L423.3 275.0L423.8 271.9L429.6 269.7L433.5 268.4L431.7 266.3L433.3 263.0L436.8 261.3L440.4 259.2L445.1 258.0L442.4 260.1L443.0 263.8L448.8 260.7L454.8 258.6L457.3 256.4L455.9 252.6L452.2 256.3L451.3 256.2L452.7 254.3L446.6 253.3L447.3 255.3L448.0 255.5L446.4 255.2L444.2 251.6L446.5 250.1L446.5 246.7L441.4 246.3L433.2 251.8L436.9 247.4L441.6 243.4L449.9 243.1L457.1 243.4L460.7 240.3L464.8 239.6L467.7 236.8L464.4 233.5L463.2 229.2L458.4 226.8L454.8 224.2L450.1 213.9L445.5 209.0L442.5 213.8L439.1 216.2L434.6 214.9L434.6 212.2L433.3 206.7L427.2 203.7L421.2 201.8L413.7 201.8L414.9 208.7L412.5 214.8L416.8 221.0L416.1 224.9L411.3 229.9L411.3 238.6L409.3 239.7L404.2 234.2L403.9 227.1L397.3 226.5L385.4 220.7L379.5 219.7L378.3 214.9L374.3 212.2L375.9 207.0L379.5 201.5L385.4 196.7L391.4 194.8L392.1 194.2L391.6 196.9L396.1 198.7L406.6 195.9L402.1 193.2L397.9 189.8L394.3 188.1L394.2 188.3L394.0 187.4L398.5 187.0L404.6 182.1L406.4 176.5L402.1 172.1L395.8 173.4L394.6 180.5L391.4 181.6L390.3 176.3L385.4 177.1L383.1 174.3L380.7 170.1L378.3 164.3L377.0 163.8L375.7 160.5L380.0 158.5L383.6 154.1L371.2 154.1L371.2 157.9L372.4 163.5L369.4 167.1L371.9 173.6L371.2 176.2L370.4 174.0L366.9 172.2L362.3 174.1L364.6 177.7L367.5 179.3L364.9 180.4L356.6 180.4L348.3 178.4L342.1 177.1L339.7 180.4L329.1 179.6L323.2 175.9L311.1 172.1L302.8 173.4L295.6 169.5L282.4 172.9L275.2 175.5L255.4 171.2L255.4 170.6L246.7 170.2L240.2 168.9L233.7 167.6L229.1 166.3L225.1 165.2L223.7 166.3L220.5 167.6ZM302.4 244.3L305.7 246.2L307.5 248.2L307.4 250.9L306.5 249.1L305.8 249.1L304.6 246.8ZM384.1 254.2L380.5 253.9L385.3 250.6L389.3 247.5L394.8 248.1L398.0 252.4L398.4 254.5L393.7 254.5L390.1 253.0ZM390.3 264.8L390.5 260.5L393.7 256.6L397.2 256.9L394.4 263.4L393.4 268.3L390.5 268.6ZM399.2 200.3L398.7 202.5L402.1 202.0L403.1 199.3ZM410.3 201.9L410.3 201.8L407.4 202.4L409.1 204.8ZM203.7 208.7L200.0 209.9L200.8 211.2L204.1 210.8ZM230.2 223.0L232.4 221.9L235.8 219.2L236.9 215.6L232.9 216.3L229.5 219.7ZM285.7 230.8L282.0 230.4L283.9 235.1L287.1 236.9ZM406.9 318.0L403.2 318.0L399.5 319.0L397.0 321.4L397.1 321.6L400.2 321.3L402.5 320.0L405.5 321.0L409.6 322.0L412.7 323.8L415.5 324.7L414.5 326.5L420.0 326.5L423.6 325.7L421.3 324.1L417.7 322.8L414.1 320.3L410.5 319.3ZM436.7 330.8L437.0 328.9L433.2 326.5L429.1 326.3L424.9 326.3L422.3 329.8L423.5 331.0L427.1 330.7L430.3 332.0L432.7 330.5ZM413.0 329.8L413.0 330.9L415.9 331.7L418.8 331.1L416.4 329.5ZM815.3 117.2L820.5 120.8L833.7 125.8L843.2 132.1L850.5 134.8L858.2 133.7L855.5 130.1L836.3 121.5L831.5 117.6L823.0 115.9L815.4 117.1ZM723.5 164.6L728.4 167.8L733.3 169.6L738.5 168.6L734.8 163.6L736.6 159.3L739.5 154.7L744.2 150.5L750.2 146.7L766.0 141.2L764.5 138.8L756.0 139.8L747.6 142.3L739.2 145.3L733.1 149.7L724.2 159.9ZM490.4 208.2L494.8 211.1L497.9 208.8L499.1 203.3L502.7 197.7L505.1 191.3L512.1 189.0L518.2 186.2L524.1 180.1L531.2 178.9L538.5 176.8L544.8 173.7L542.4 171.6L547.0 170.0L548.2 164.9L545.9 160.5L549.3 157.0L555.4 151.8L553.0 147.4L551.8 141.6L555.3 136.6L556.5 129.9L560.1 123.6L567.2 120.8L572.3 114.8L559.9 113.0L548.0 109.6L538.4 104.8L521.6 102.4L504.8 103.6L488.1 106.6L471.3 110.1L457.0 112.5L447.3 117.6L442.5 124.3L433.0 128.5L425.6 132.9L429.4 137.2L434.2 141.3L441.4 144.3L452.2 143.8L460.5 147.2L464.0 153.7L466.9 160.6L469.9 166.3L469.9 171.7L478.0 173.7L473.6 177.7L471.6 183.1L473.6 190.0L480.8 201.5L484.4 206.4ZM717.7 173.3L715.7 175.8L719.9 177.3L720.4 174.3ZM546.8 186.0L541.9 189.6L546.0 191.1L542.7 192.1L542.7 192.3L547.8 193.9L546.1 196.6L552.7 197.9L558.8 197.5L565.3 194.8L568.3 191.5L565.8 187.7L561.1 186.1L555.0 187.3L550.4 189.2ZM653.0 217.8L655.3 217.0L656.0 215.1L652.7 216.3ZM643.8 219.9L644.3 221.8L645.8 219.7L646.4 217.5L646.1 217.4ZM627.1 227.2L629.4 228.0L631.0 225.7L630.1 223.7L626.6 225.2ZM597.9 228.5L596.9 225.9L594.7 224.1L593.5 224.1L594.8 222.8L596.1 219.5L594.7 218.3L591.6 218.6L593.2 216.6L593.2 215.2L588.4 215.2L587.7 217.8L586.4 219.9L586.9 222.8L585.3 223.2L587.3 226.3L588.8 226.3L588.3 228.2L591.0 228.6L592.5 228.4L591.9 230.1L593.3 231.7L592.7 232.7L589.5 233.1L590.2 235.5L589.6 237.0L587.6 238.1L592.7 239.5L589.6 240.4L588.4 242.1L586.7 243.6L586.8 243.8L590.6 243.1L592.7 242.2L599.4 241.5L603.1 240.9L604.4 239.6L602.7 239.0L604.6 237.0L604.9 234.7L601.9 234.0L601.3 232.2L600.0 230.2ZM585.7 236.7L586.5 233.3L586.0 231.1L587.7 229.4L585.6 226.8L582.6 226.4L580.2 227.5L580.0 229.5L576.3 230.2L578.3 234.2L575.6 237.5L576.5 238.7L580.3 239.0ZM453.4 246.8L452.4 245.4L445.9 243.8L445.8 243.9L447.3 245.9L453.4 246.9ZM467.0 253.6L471.5 254.2L474.8 251.9L472.1 245.5L468.5 243.6L467.8 239.0L464.5 240.5L462.6 244.3L459.7 248.0L458.3 251.1L463.0 251.4ZM619.9 270.7L620.6 273.4L620.4 276.1L622.1 276.5L623.8 275.8L624.0 272.0L622.9 269.7L622.7 269.8L623.5 267.8L623.2 264.4L621.1 266.2L621.1 268.4L622.6 269.8ZM609.0 274.9L608.3 273.4L605.8 274.5L607.7 275.7ZM638.0 278.2L632.8 278.2L630.2 278.8L630.2 280.3L636.6 282.9ZM656.8 286.9L659.1 287.5L662.9 287.5L663.9 286.2L659.2 285.9L656.8 285.3ZM679.5 288.6L682.1 287.4L683.5 285.1L679.4 285.9L677.5 286.8L677.9 288.0ZM621.4 229.0L620.7 231.4L614.8 232.7L611.9 234.1L610.6 236.7L609.5 238.6L607.2 239.8L604.4 240.8L603.9 243.0L600.9 244.5L599.3 245.7L595.9 244.3L596.4 247.6L593.4 247.3L588.7 248.3L589.6 250.5L593.7 251.7L595.6 253.8L597.4 256.7L597.2 260.4L596.1 263.4L591.0 263.4L586.2 262.8L581.4 262.6L578.0 264.4L579.0 267.2L579.5 270.0L578.8 273.4L577.5 276.9L579.3 278.6L579.0 282.1L582.8 281.5L585.3 283.1L587.1 284.8L589.9 282.8L593.4 282.8L596.4 282.0L599.1 279.7L601.4 277.1L600.1 275.6L600.8 274.1L602.6 271.4L606.0 269.9L608.5 267.8L608.5 264.7L610.6 263.9L613.7 264.5L619.8 262.4L622.1 261.0L624.7 262.4L625.5 265.0L627.9 266.8L630.3 269.1L633.5 270.2L637.9 273.6L638.6 276.5L637.8 279.4L637.9 279.4L639.7 278.4L641.8 276.3L640.8 274.2L641.4 272.4L644.2 274.1L644.9 272.5L641.4 270.4L639.2 268.1L634.7 266.1L633.0 262.9L630.3 260.7L630.7 258.0L632.9 257.2L633.1 259.6L635.6 259.0L636.7 261.2L639.2 263.3L645.4 267.1L646.9 268.7L646.7 272.1L648.7 274.4L650.1 276.7L651.7 278.2L651.0 279.6L652.0 282.2L653.6 283.1L655.2 283.4L656.3 281.3L655.9 279.7L657.1 280.1L658.4 279.0L655.5 276.7L656.4 275.7L654.9 273.9L655.5 272.3L657.6 273.2L658.6 271.1L661.5 271.1L663.2 272.0L665.2 271.7L670.4 269.8L667.8 267.9L667.3 265.5L669.0 263.5L669.7 260.6L671.8 258.3L673.7 255.6L675.9 254.5L678.2 255.7L680.3 256.1L678.2 257.8L680.6 260.7L683.2 260.4L685.6 259.2L688.3 258.2L690.1 259.8L693.2 261.3L696.1 263.9L699.3 266.1L699.6 268.7L695.7 270.3L691.5 270.3L688.0 269.5L684.8 267.5L681.4 267.5L678.2 267.8L674.6 270.1L671.0 270.1L670.2 271.8L663.8 272.3L662.9 274.6L664.3 275.7L663.2 277.9L664.9 279.7L666.2 282.0L672.4 284.0L674.7 282.6L678.2 284.5L681.5 284.2L684.3 282.9L686.6 283.1L686.2 286.6L685.2 290.1L683.8 293.6L682.4 296.7L680.7 297.4L677.5 297.1L674.2 296.3L669.9 297.9L665.2 296.9L660.4 295.6L656.1 293.7L651.9 292.9L648.2 295.1L648.2 298.0L646.0 299.5L638.5 296.7L637.1 294.3L634.1 293.4L630.5 292.9L627.0 291.3L625.1 289.4L626.7 287.3L625.9 284.5L626.7 281.6L624.0 280.7L619.7 281.8L610.1 281.8L605.3 282.4L598.1 285.1L594.5 286.7L589.9 286.4L586.3 284.7L585.5 287.1L583.6 289.7L580.1 291.6L577.6 295.2L576.4 301.5L574.1 303.5L570.5 305.5L568.1 307.6L565.4 311.3L563.7 315.4L561.6 319.7L560.1 324.0L561.8 328.5L560.6 336.3L558.4 339.1L560.1 342.1L560.6 345.1L564.0 347.8L565.7 349.9L568.5 353.1L569.7 356.0L572.7 358.2L575.3 359.9L578.9 362.7L582.4 364.2L588.6 362.5L592.2 362.5L595.8 363.3L599.5 361.8L606.6 359.7L610.0 359.7L612.4 361.3L615.3 364.5L621.7 364.0L623.7 366.9L622.8 373.5L621.6 376.7L623.1 380.1L628.6 385.6L629.5 388.9L630.9 392.5L631.9 396.6L633.3 400.9L632.6 404.5L629.8 409.3L628.3 413.8L629.0 418.1L634.5 428.0L635.0 433.1L636.2 438.2L638.1 442.8L640.5 447.3L642.9 452.5L644.6 460.1L648.4 461.5L652.0 460.4L656.8 459.6L661.6 459.3L664.8 458.8L668.9 456.0L673.0 451.8L678.5 444.1L679.0 439.5L680.9 436.5L685.2 433.9L685.7 430.5L684.1 426.7L684.5 422.6L696.4 413.7L698.2 409.5L697.7 399.9L695.3 396.0L695.1 392.4L693.6 389.3L696.9 381.8L701.2 376.8L704.8 373.5L709.6 369.9L713.2 366.3L716.8 362.0L719.2 357.8L720.9 353.5L722.8 349.4L723.3 345.6L720.1 346.4L707.1 349.0L704.1 346.5L704.1 344.3L700.7 341.6L694.8 336.2L692.9 330.8L690.3 328.9L689.8 324.7L688.8 320.9L683.5 312.1L681.6 307.4L679.3 303.6L678.9 302.2L680.5 304.6L682.7 306.4L683.6 304.0L683.5 304.3L685.3 307.2L688.4 311.5L690.0 315.4L692.9 319.1L694.3 323.6L697.2 327.4L699.6 331.6L702.5 335.3L702.7 339.6L703.9 343.9L706.3 344.5L714.3 342.0L717.9 340.5L725.5 336.4L732.2 332.4L735.8 331.2L738.8 328.7L740.0 324.9L741.9 322.9L743.9 319.7L740.9 316.8L737.5 316.0L735.9 313.4L735.3 309.6L732.7 312.5L729.6 315.2L726.2 315.5L723.8 314.8L724.3 312.9L723.1 310.4L722.9 310.4L722.0 313.1L720.9 311.3L719.9 308.7L717.5 306.1L716.1 303.6L715.7 300.9L717.8 299.8L720.5 300.7L721.9 303.6L724.3 306.4L727.2 308.8L730.2 309.4L733.3 309.1L736.3 308.6L737.4 311.6L744.0 312.9L748.9 313.4L753.7 312.9L758.4 312.7L761.1 314.1L763.0 316.9L765.5 318.7L767.4 319.5L765.2 320.4L768.6 324.0L771.7 324.0L773.8 322.5L774.2 324.1L774.4 328.0L774.9 331.5L776.1 336.0L778.1 339.7L779.2 343.3L784.1 353.5L785.9 355.4L787.8 353.6L789.7 352.4L791.7 349.9L791.9 346.9L792.9 343.7L792.2 340.8L792.6 337.3L794.9 336.1L798.1 333.6L804.0 327.7L806.4 326.5L810.0 322.5L815.9 321.5L817.6 320.3L820.0 320.3L821.1 323.7L823.8 326.2L825.2 329.1L826.4 332.3L826.1 336.1L829.1 336.7L831.5 334.7L833.6 334.9L834.3 338.4L836.4 346.2L836.2 350.5L835.4 353.4L836.7 355.7L839.1 358.3L840.2 361.2L841.2 364.5L842.7 367.7L847.8 371.4L850.2 371.4L848.4 366.5L847.9 362.9L845.9 360.0L843.7 358.0L841.4 357.1L840.2 354.0L838.3 351.6L838.1 348.6L839.8 345.7L840.0 342.7L841.0 342.3L841.7 344.2L844.4 344.7L848.7 349.5L851.2 350.7L851.0 354.0L853.0 353.1L855.7 351.2L857.8 349.3L861.5 347.0L862.3 343.7L862.0 339.5L859.8 335.7L856.7 333.8L854.3 330.9L853.9 327.8L856.2 324.0L859.4 322.3L862.3 322.3L863.0 324.2L864.7 325.4L865.8 323.0L869.7 321.8L873.3 320.3L876.9 319.2L881.0 317.0L884.2 314.4L886.8 311.6L889.0 307.7L891.4 304.6L892.2 301.5L890.3 299.3L892.4 297.5L891.4 294.6L889.0 291.1L886.2 288.0L887.3 286.0L890.1 283.3L893.8 280.8L888.8 279.3L884.8 279.9L882.4 277.6L883.0 275.9L886.5 274.2L890.0 271.2L892.1 272.4L890.4 276.9L897.9 273.7L900.2 274.7L899.3 276.8L900.6 279.7L903.3 281.9L902.7 285.0L902.9 289.2L910.1 286.3L910.3 282.3L908.1 278.3L905.9 274.9L908.1 273.6L911.2 270.7L913.6 266.7L915.9 264.6L918.7 265.7L922.4 264.2L926.5 260.6L930.4 256.8L933.2 252.6L936.4 248.5L937.6 238.2L938.8 233.5L935.5 230.7L931.9 231.4L928.4 230.8L924.8 228.7L928.4 227.2L932.0 221.8L941.5 213.6L946.2 212.9L952.2 213.2L958.1 211.8L962.9 213.9L967.8 213.6L971.5 209.6L976.2 204.9L981.9 204.2L983.7 208.8L985.8 206.3L990.6 203.4L993.3 202.0L990.7 205.6L986.7 209.6L978.3 216.6L974.7 220.1L972.5 225.0L973.0 231.0L973.9 235.9L975.2 241.1L977.5 239.3L979.9 236.1L983.5 234.4L984.7 231.2L988.7 227.9L991.2 223.7L989.1 219.0L991.2 216.9L991.9 212.4L995.3 211.1L1000.1 209.6L1006.0 210.0L1009.7 208.9L1014.5 206.0L1019.3 203.4L1024.0 201.6L1030.3 202.0L1028.5 198.2L1025.0 194.9L1026.5 193.2L1030.0 192.1L1031.4 190.9L1031.4 175.8L1027.6 174.2L1021.6 172.5L1009.0 171.7L1004.8 176.2L1000.1 172.9L992.8 172.5L986.9 173.4L983.4 171.3L978.6 167.4L971.3 166.9L964.2 167.3L959.5 163.9L953.4 161.2L947.4 160.7L940.2 159.3L935.2 160.3L934.0 164.3L929.5 165.2L924.7 164.3L918.6 164.7L915.0 167.8L911.2 166.9L909.4 162.7L908.1 157.1L903.2 155.7L895.9 155.2L890.0 158.0L884.1 157.1L878.1 155.2L872.1 154.8L863.7 154.8L858.5 155.8L862.6 153.8L869.9 150.0L872.4 143.9L866.1 140.3L858.9 140.3L855.4 138.9L850.1 135.2L843.2 138.9L837.3 141.3L830.1 143.3L823.0 143.8L815.8 145.8L808.5 148.7L806.1 153.8L799.1 153.4L792.7 155.3L795.3 159.3L798.9 163.7L799.9 168.6L793.2 162.5L788.3 160.7L784.8 161.6L779.9 159.7L776.8 164.9L778.5 171.5L779.7 177.8L777.4 183.0L775.8 184.3L777.4 180.6L774.4 177.3L773.0 171.5L775.0 165.0L774.2 159.0L769.2 157.0L765.0 158.9L761.8 164.4L760.1 168.0L760.6 173.7L763.3 177.7L750.1 172.9L745.2 172.5L741.6 175.9L736.8 177.1L731.0 178.4L727.4 176.7L722.5 178.0L717.6 180.5L714.1 184.0L711.5 183.0L710.8 178.8L706.4 177.5L705.1 179.8L706.3 184.0L705.6 187.5L703.5 186.1L699.7 187.3L696.5 189.8L696.0 193.1L692.7 192.0L688.7 191.6L688.6 191.7L691.1 194.2L690.2 195.8L686.8 194.7L684.1 193.3L684.1 189.8L681.6 187.0L679.7 184.4L681.8 185.0L686.6 187.0L692.6 187.8L697.1 187.4L699.6 184.8L698.4 181.7L694.0 178.8L689.2 176.3L684.3 174.6L679.5 173.8L672.8 172.2L675.2 170.1L670.0 167.8L666.4 166.9L662.0 166.5L656.7 167.4L649.5 170.8L645.9 171.7L639.9 176.4L635.1 180.5L632.6 183.8L628.6 190.9L625.5 193.6L623.1 196.3L619.6 197.8L616.0 200.0L613.0 202.3L612.3 205.0L612.3 208.3L612.8 212.3L614.2 215.6L617.2 217.8L621.0 217.1L624.2 214.2L625.6 212.1L625.9 213.1L627.1 214.8L629.5 221.1L630.9 223.8L631.4 226.6L634.7 226.6L635.4 224.6L638.5 224.3L639.8 222.8L641.4 215.6L643.8 214.2L646.3 211.6L645.0 209.6L642.0 207.8L642.4 204.7L643.8 201.5L646.6 198.6L650.5 196.3L654.1 189.3L657.5 189.0L660.2 189.3L660.8 191.4L654.2 196.3L651.0 199.4L651.7 203.2L651.5 207.7L656.7 211.1L666.4 208.9L669.8 209.3L671.6 210.4L670.4 210.2L667.5 211.7L663.9 212.0L660.3 212.0L656.5 213.1L656.5 215.2L658.7 216.9L658.2 220.4L656.2 220.4L654.7 218.2L651.8 219.4L650.5 222.6L650.8 226.3L649.4 228.2L647.4 229.4L645.1 228.8L642.4 228.4L634.8 231.1L632.9 229.4L629.7 229.8L626.9 230.7L624.7 229.2L623.8 227.7L624.1 227.1L624.3 227.6L626.4 227.6L626.4 225.8L624.7 225.8L626.7 223.7L625.7 222.3L626.2 218.1L623.4 219.7L620.4 220.4L619.7 223.3L620.7 226.1ZM685.0 255.3L691.5 253.0L693.5 252.8L692.5 253.4L690.8 255.8L688.4 258.0L684.6 257.0ZM726.1 265.4L726.9 268.3L728.5 271.2L726.9 273.4L728.5 275.7L729.7 279.0L728.5 282.0L723.7 282.6L719.7 280.7L717.5 278.5L718.2 275.7L719.2 272.0L716.6 268.3L714.2 264.8L712.5 260.5L713.0 257.2L715.9 256.0L719.0 254.2L723.7 252.7L727.3 254.5L726.1 257.8L722.1 260.2L723.0 262.5ZM679.5 373.5L681.9 375.2L681.9 378.1L679.5 380.7L677.1 380.2L676.4 376.9L676.6 373.8ZM860.3 329.7L862.5 330.8L864.6 330.0L866.4 327.0L865.2 325.5L862.6 325.8L860.3 327.6ZM443.7 329.8L439.6 329.5L439.6 331.2L443.4 331.2ZM880.5 354.6L880.7 354.8L883.5 352.6L886.7 349.1L886.7 346.9L886.5 346.9L882.1 351.8ZM794.0 352.2L791.5 350.8L791.2 353.4L791.2 356.5L791.7 359.6L793.3 360.7L796.0 359.3L796.7 357.0ZM883.7 363.2L886.1 361.8L879.9 357.4L878.3 359.3L876.2 362.3L873.1 363.8L870.7 366.6L866.6 368.1L866.3 370.6L863.7 370.2L861.6 370.7L861.0 373.3L861.5 375.8L863.4 377.7L864.2 381.4L867.9 382.9L872.0 382.7L875.1 384.6L878.7 384.1L879.0 381.3L880.2 378.2L881.8 376.0L882.6 373.2L885.1 372.0L882.6 368.4L882.6 365.0ZM850.7 378.9L849.1 376.8L848.4 373.9L845.9 371.9L842.3 369.5L837.1 365.2L834.6 362.3L831.4 361.8L828.2 360.7L828.8 363.1L836.4 370.6L837.1 373.4L840.3 377.0L842.4 380.6L845.1 384.3L848.0 386.2L850.7 388.6L853.8 388.6L854.4 385.3L854.4 381.6ZM874.7 392.8L870.2 390.8L866.0 389.8L864.8 390.5L860.6 390.3L857.8 389.1L854.0 388.6L851.8 390.9L855.2 392.5L860.0 393.4L874.4 395.7L874.5 394.5L876.8 395.8L880.4 396.3L885.2 395.9L890.0 396.1L895.0 395.8L895.0 393.9L890.0 394.1L874.6 393.9ZM886.3 398.7L889.9 399.3L889.0 397.1L884.8 396.8ZM719.7 415.2L721.4 411.9L720.9 406.9L718.5 402.9L715.2 407.1L712.8 410.5L710.5 412.4L706.8 413.4L705.5 416.8L706.5 420.5L705.6 424.1L703.9 427.4L705.6 435.2L708.1 437.1L711.2 436.6L713.7 434.4L715.6 428.1L717.5 423.1ZM765.4 501.8L765.4 503.8L768.1 504.5L769.6 502.5ZM453.8 510.1L455.0 512.1L459.5 512.7L462.8 510.2L458.2 509.0ZM930.6 150.6L937.8 151.5L952.2 149.6L961.8 150.6L971.8 149.6L971.8 149.2L961.8 147.2L952.2 146.2L945.1 144.8L937.9 142.8L930.6 142.8L925.5 146.5ZM933.8 156.1L944.0 157.6L944.9 155.3L937.8 153.3L933.7 156.0ZM943.6 239.0L942.9 233.5L940.2 229.5L940.0 229.5L939.5 232.9L939.3 237.5L940.0 242.3L940.2 246.9L939.7 251.5L940.0 256.5L940.2 256.5L941.5 254.5L944.1 255.5L944.3 255.3L942.2 252.9L943.3 248.6L946.6 247.0L944.5 243.7ZM938.4 263.7L936.5 263.7L934.6 266.0L935.9 267.0L935.1 269.5L937.6 268.5L938.0 266.5L940.2 266.5L943.4 268.0L945.6 265.3L949.3 264.1L948.1 263.3L948.4 260.7L945.1 261.4L942.3 259.7L939.6 257.3L939.3 260.4ZM937.8 282.4L938.1 279.7L939.5 277.7L940.5 274.8L939.3 272.5L939.0 269.8L937.8 269.5L935.7 270.7L934.7 276.1L931.2 281.0L928.7 281.7L929.4 280.4L929.1 280.1L925.7 284.6L924.1 285.4L921.1 285.6L917.6 286.2L914.9 288.4L913.2 290.2L910.5 291.7L910.8 293.6L912.2 294.6L912.0 297.0L913.5 298.0L915.1 296.5L916.3 293.2L915.8 291.1L914.2 290.2L916.8 290.2L918.8 289.4L921.6 288.6L923.9 288.6L923.4 290.0L925.4 291.6L927.9 289.1L928.8 288.6L933.0 288.3L933.7 286.9L934.8 286.0L935.3 287.4L937.7 285.7L937.1 284.5ZM917.0 290.6L917.3 292.2L918.2 293.5L919.8 292.3L921.4 291.8L923.1 290.5L922.2 288.8L919.1 289.4ZM889.1 314.3L887.6 317.2L888.1 319.6L889.8 321.5L891.4 317.3L892.4 313.6L891.2 312.3ZM901.5 347.6L900.5 344.2L897.7 344.2L897.4 341.9L895.6 340.8L893.2 340.6L891.7 338.8L891.7 336.5L893.4 333.5L893.1 329.8L891.2 329.2L888.6 329.5L888.3 331.5L888.3 333.8L886.8 335.3L887.4 337.7L888.8 339.7L889.3 341.5L891.8 341.5L893.5 342.5L895.1 343.0L897.7 344.6L899.0 346.9L897.8 348.5L899.0 350.8L900.5 350.2ZM889.9 345.5L891.5 344.6L890.9 342.0L887.9 341.7ZM892.2 349.5L893.4 349.5L893.6 351.9L895.7 352.5L896.2 348.5L894.9 346.7L891.9 345.8ZM895.3 356.8L896.9 357.4L897.5 360.0L900.1 358.6L900.7 361.6L902.4 359.5L903.6 357.0L902.9 353.3L900.5 350.6L898.2 353.8L895.7 353.4L892.9 355.2L892.0 358.1ZM906.8 368.9L905.3 369.5L905.3 372.1L905.5 373.8L906.7 376.9L906.8 376.9L908.2 373.4L908.7 370.8ZM896.2 376.5L896.2 376.4L892.8 376.4L889.6 377.3L888.2 375.7L889.6 373.6L898.0 373.8L900.5 371.3L899.1 370.6L895.9 372.1L892.4 371.9L889.5 371.1L886.9 372.4L886.9 374.7L884.5 380.7L885.0 382.5L886.2 384.2L886.2 387.9L888.8 388.2L888.8 381.9L889.9 381.5L892.2 385.9L893.7 387.7L894.6 384.5L893.3 382.0L891.6 379.4L893.7 378.8ZM912.8 383.9L913.8 382.3L910.4 380.9L906.5 381.5L906.5 383.2L909.1 382.9ZM905.1 381.9L901.6 381.9L902.3 383.8L905.1 383.8ZM965.0 385.1L965.8 385.8L967.0 385.4L964.3 382.2L961.0 380.3L960.8 380.5L964.5 384.6L962.8 386.3L959.3 387.4L954.9 387.7L955.6 389.1L958.2 389.8L961.9 389.1L964.9 386.6ZM943.2 396.3L944.7 393.9L946.9 393.2L949.6 394.4L952.0 397.5L954.5 399.2L959.4 400.2L961.8 399.0L958.3 397.1L955.9 394.7L953.6 393.0L952.6 391.2L954.4 390.7L953.6 388.7L950.0 387.5L949.5 385.8L946.3 383.4L942.7 382.4L937.9 380.5L929.4 378.1L925.7 380.3L923.5 382.0L921.8 379.7L921.3 376.2L917.5 375.2L913.7 376.2L913.7 378.0L916.2 380.0L918.6 380.2L920.3 381.1L918.0 381.5L918.0 384.3L919.9 384.3L927.0 386.2L930.5 387.9L931.8 390.7L929.8 392.4L931.7 394.7L934.9 394.4L937.7 396.6L940.2 396.8ZM973.5 389.5L970.4 387.2L970.2 387.3L971.1 390.0L973.5 391.5ZM986.0 398.1L984.7 395.4L980.6 393.2L980.4 393.4L983.1 397.5ZM895.5 399.4L895.6 399.5L899.2 399.0L905.2 395.4L904.5 394.4L899.9 395.1L897.5 396.9ZM1001.6 414.7L1000.7 411.2L998.8 410.2L998.7 410.3L999.8 413.2L1001.4 414.8ZM1027.8 416.5L1024.4 416.5L1024.7 418.8L1027.8 418.8ZM995.1 427.2L998.8 429.2L1000.5 428.9L996.6 425.3L992.6 423.0L992.4 423.2ZM891.2 459.0L896.1 459.0L897.3 457.1L900.8 455.8L911.6 452.9L915.1 452.7L918.6 454.5L921.4 456.6L923.8 460.0L925.3 461.4L927.9 462.7L930.0 456.4L930.2 457.5L931.6 461.2L930.8 463.6L933.6 464.2L934.7 467.4L937.2 470.2L943.9 472.5L946.2 470.3L947.7 471.0L950.5 473.4L952.8 471.3L955.9 469.9L959.6 468.8L960.1 465.1L963.2 457.8L965.6 454.4L966.8 450.6L968.0 445.9L968.0 441.9L967.3 438.0L965.5 435.4L962.0 432.4L961.5 429.8L958.4 427.8L956.7 423.8L953.5 421.5L950.7 419.8L948.6 411.8L947.1 409.5L944.7 408.7L943.6 404.5L941.8 399.8L940.5 400.8L939.3 404.7L938.5 413.0L937.2 416.5L933.6 416.3L930.3 413.9L927.2 412.4L925.0 410.1L926.1 406.6L928.4 404.3L927.2 403.1L923.5 403.6L920.0 402.6L917.5 401.5L917.3 403.1L913.8 403.6L912.5 405.1L910.3 408.1L910.3 410.4L908.0 410.4L906.9 409.9L903.9 407.9L901.3 409.0L898.9 411.7L896.2 413.4L895.8 416.0L892.9 415.2L892.6 418.4L889.9 421.5L876.7 425.2L873.6 427.2L870.9 427.8L872.5 430.0L872.0 432.5L871.8 435.6L872.8 438.2L871.2 437.8L874.4 444.6L875.4 448.5L876.8 451.9L877.1 455.0L875.9 457.6L875.4 460.0L877.9 461.7L881.7 462.3L887.7 459.3ZM931.1 464.7L930.3 463.4L926.9 463.4L927.6 464.7ZM1025.3 473.5L1027.3 471.5L1027.6 468.6L1024.0 469.5L1021.5 468.7L1020.5 465.8L1018.8 466.4L1017.9 463.8L1015.7 461.6L1013.5 459.7L1013.3 459.8L1014.2 462.4L1017.7 466.8L1018.2 469.4L1017.7 472.1L1015.9 474.0L1018.5 475.2L1019.1 476.4L1018.1 479.4L1019.6 480.4L1021.7 479.5L1023.9 476.8L1024.2 474.3ZM955.5 481.3L955.5 477.9L952.2 477.9L949.8 478.4L946.3 477.2L947.9 482.8L949.6 485.8L952.3 486.2L954.6 484.3ZM1014.2 485.4L1017.0 481.1L1017.8 479.2L1016.4 477.9L1013.6 476.7L1012.3 477.7L1010.1 481.7L1007.8 484.2L1002.3 487.5L999.8 489.9L998.5 492.8L1001.1 493.8L1003.6 495.0L1006.8 494.7L1009.3 492.8L1010.3 489.8L1011.7 487.9L1014.7 486.6Z" fill="#575d74" fill-rule="evenodd"/><g transform="translate(649.3 242.0)"><circle r="15.5" fill="#fff" stroke="#be33b4" stroke-width="1.9"/><g fill="#be33b4" transform="translate(-7.2 -7.6) scale(0.4)"><use href="#i-db" width="36" height="40"/></g></g><g transform="translate(634.0 242.0)"><circle r="15.5" fill="#fff" stroke="#53b0b5" stroke-width="1.9"/><g fill="#53b0b5" transform="translate(-7.2 -7.6) scale(0.4)"><use href="#i-db" width="36" height="40"/></g></g><g transform="translate(635.8 279.0)"><circle r="16" fill="#fff" stroke="#58a5ee" stroke-width="2.4"/><g fill="#58a5ee" transform="translate(-7.2 -7.6) scale(0.4)"><use href="#i-db" width="36" height="40"/></g></g></svg>
  </div>

  <!-- MEMBERS card -->
  <div class="card" id="memcard" style="left:1350px;top:936px">
    <h2>MEMBERS</h2>
    <div class="more">More »</div>
    <div class="sec" style="top:96px">Direct</div>
    <div class="sec" style="top:308px">Effective</div>
    <div class="tile" style="left:40px;top:160px"><svg class="abs" style="left:42px;top:38px;color:#4b5c8b" width="40" height="38" fill="#4b5c8b"><use href="#i-tree"/></svg><span style="left:100px">3</span></div>
    <div class="tile" style="left:320px;top:160px"><svg class="abs" style="left:47px;top:38px" width="32" height="34" fill="#4b5c8b"><use href="#i-user"/></svg><span style="left:100px">2</span></div>
    <div class="tile" style="left:40px;top:372px"><svg class="abs" style="left:42px;top:38px;color:#4b5c8b" width="40" height="38" fill="#4b5c8b"><use href="#i-tree"/></svg><span style="left:100px">3</span></div>
    <div class="tile" style="left:320px;top:372px"><svg class="abs" style="left:47px;top:38px" width="32" height="34" fill="#4b5c8b"><use href="#i-user"/></svg><span style="left:100px">354</span></div>
  </div>
  <div id="bottomfade"></div>
</div>
<svg class="abs" style="left:0;top:1518px;z-index:60" width="14" height="12" viewBox="0 0 14 12"><path d="M0 6.500C1 9.500 4.500 12 11 12H0Z" fill="#0a0a0c"/></svg>
<svg class="abs" style="left:2848px;top:1524px;z-index:60" width="14" height="6" viewBox="0 0 14 6"><path d="M14 1.500C11 4 6 6 1.500 6H14Z" fill="#0a0a0c"/></svg>
</body>
</html>
